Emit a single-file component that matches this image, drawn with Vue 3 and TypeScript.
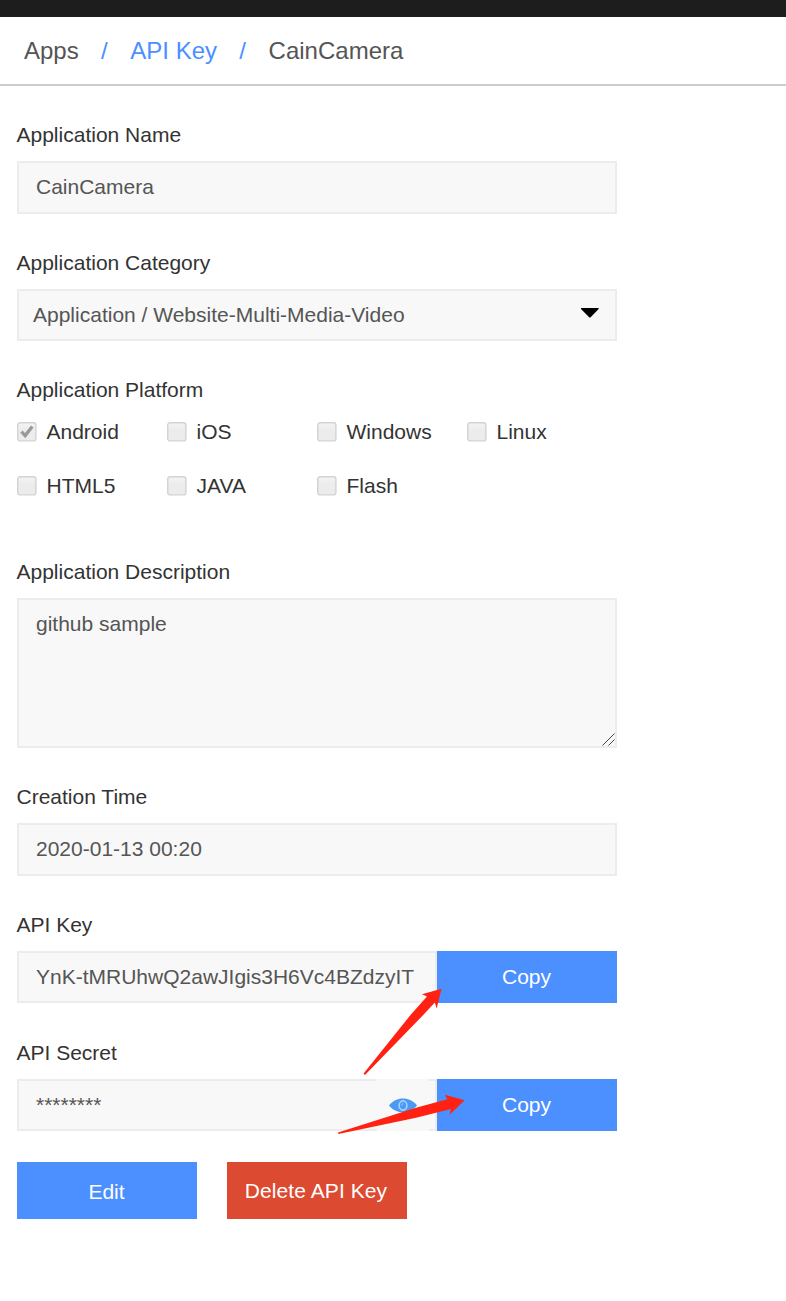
<script setup lang="ts">
interface Platform {
  name: string
  checked: boolean
}

const platforms: Platform[] = [
  { name: 'Android', checked: true },
  { name: 'iOS', checked: false },
  { name: 'Windows', checked: false },
  { name: 'Linux', checked: false },
  { name: 'HTML5', checked: false },
  { name: 'JAVA', checked: false },
  { name: 'Flash', checked: false },
]
</script>

<template>
  <div class="page">
    <div class="topbar"></div>
    <nav class="crumbs">
      <span class="crumb">Apps</span>
      <span class="sep">/</span>
      <a class="crumb link">API Key</a>
      <span class="sep">/</span>
      <span class="crumb">CainCamera</span>
    </nav>

    <main class="form">
      <section class="group">
        <div class="label">Application Name</div>
        <div class="field tall">CainCamera</div>
      </section>

      <section class="group">
        <div class="label">Application Category</div>
        <div class="field select">
          <span>Application / Website-Multi-Media-Video</span>
          <svg class="caret" width="18" height="10" viewBox="0 0 18 10"><path d="M0 0H17.6V1L9.4 9.6H8.4L0 1Z" /></svg>
        </div>
      </section>

      <section class="group">
        <div class="label">Application Platform</div>
        <div class="platforms">
          <div v-for="p in platforms" :key="p.name" class="platform">
            <svg class="box" width="20" height="20" viewBox="0 0 20 20">
              <defs>
                <linearGradient id="box-fill" x1="0" y1="0" x2="0" y2="1">
                  <stop offset="0" stop-color="#f4f4f4" />
                  <stop offset="0.4" stop-color="#ececec" />
                  <stop offset="1" stop-color="#ececec" />
                </linearGradient>
              </defs>
              <rect x="0.7" y="0.7" width="18.2" height="18.2" rx="2.4" fill="url(#box-fill)" stroke="#d3d3d3" stroke-width="1.4" />
              <path v-if="p.checked" d="M3.2 10.8L5.6 8.6L8 10.9L14 3.6L16.6 5.4L8.3 16.2Z" fill="#999" />
            </svg>
            <span>{{ p.name }}</span>
          </div>
        </div>
      </section>

      <section class="group description">
        <div class="label">Application Description</div>
        <div class="field area">
          <span>github sample</span>
          <svg class="grip" width="13" height="13" viewBox="0 0 13 13"><path d="M0.5 12.5L12.5 0.5M6.5 12.5L12.5 6.5" /></svg>
        </div>
      </section>

      <section class="group">
        <div class="label">Creation Time</div>
        <div class="field tall">2020-01-13 00:20</div>
      </section>

      <section class="group">
        <div class="label">API Key</div>
        <div class="row">
          <div class="field">YnK-tMRUhwQ2awJIgis3H6Vc4BZdzyIT</div>
          <button class="btn copy">Copy</button>
        </div>
      </section>

      <section class="group secret">
        <div class="label">API Secret</div>
        <div class="row">
          <div class="field masked">
            <span>********</span>
            <span class="reveal">
              <svg width="28" height="16" viewBox="0 0 28 16">
                <path d="M0 8.5C7 -0.8 21 -0.8 28 8.5C21 17.6 7 17.6 0 8.5Z" fill="#4a9af5" />
                <ellipse cx="14" cy="8.5" rx="3.9" ry="4.6" fill="#4a9af5" stroke="#a9d0fb" stroke-width="1.6" />
                <path d="M12.6 8.4A1.8 2.2 0 0 1 14 6.4" fill="none" stroke="#a9d0fb" stroke-width="1" />
              </svg>
            </span>
          </div>
          <button class="btn copy">Copy</button>
        </div>
      </section>

      <div class="actions">
        <button class="btn edit">Edit</button>
        <button class="btn delete">Delete API Key</button>
      </div>
    </main>

    <!-- Callout arrows pointing at the copy buttons -->
    <svg class="arrows" width="786" height="1301" viewBox="0 0 786 1301">
      <path d="M441.5 988.8L422 994.2L427 996.4L410.5 1015L363.6 1073.6L365 1075L423.2 1015L434.8 1002.6L436.7 1008.4Z" />
      <path d="M464.6 1100.3L444.8 1094.8L447.4 1099.2L416 1107.8L338 1132.5L338.4 1134L416 1117.8L450.9 1109L449.5 1114.7Z" />
    </svg>
  </div>
</template>

<style>
body {
  background: #fff;
}
</style>

<style scoped>
.page {
  position: relative;
  width: 786px;
  height: 1301px;
  overflow: hidden;
  box-sizing: border-box;
  font-family: "Liberation Sans", Arial, sans-serif;
  font-size: 21px;
  color: #333;
}
.page * {
  box-sizing: border-box;
}
.topbar {
  height: 17px;
  background: #1d1d1d;
}
.crumbs {
  display: flex;
  align-items: center;
  height: 69px;
  padding-left: 24px;
  border-bottom: 2px solid #ccc;
  font-size: 24px;
  color: #555;
}
.sep {
  width: 7px;
  margin: 0 22.3px;
}
.sep,
.link {
  color: #4c8fff;
}
.form {
  width: 617px;
  padding: 35px 0 0 17px;
}
.group {
  margin-bottom: 35px;
}
.label {
  height: 28px;
  margin: 0 0 12px -0.5px;
  line-height: 28px;
}
.field {
  display: flex;
  align-items: center;
  height: 52px;
  padding: 0 17px;
  border: 2px solid #ececec;
  background: #f8f8f8;
  color: #555;
  white-space: nowrap;
}
.tall {
  height: 53px;
  padding-bottom: 1px;
}
.select {
  justify-content: space-between;
  padding: 0 16px 0 14px;
}
.caret {
  margin-bottom: 5px;
  fill: #000;
}
.platforms {
  display: grid;
  grid-template-columns: repeat(4, 150px);
  row-gap: 34px;
  padding: 6px 0 27px;
}
.platform {
  display: flex;
  align-items: center;
  gap: 9.5px;
  height: 20px;
  line-height: 20px;
}
.box {
  display: block;
}
.area {
  position: relative;
  align-items: flex-start;
  height: 150px;
  padding-top: 10px;
  line-height: 28px;
}
.grip {
  position: absolute;
  right: 0;
  bottom: 0;
}
.grip path {
  stroke: #444;
  stroke-width: 1;
}
.row {
  display: flex;
}
.row .field {
  flex: 1;
}
.group.secret {
  margin-top: 36px;
  margin-bottom: 31px;
}
.btn {
  width: 180px;
  padding: 0 1px 0 0;
  border: 0;
  background: #4c8fff;
  color: #fff;
  font: inherit;
}
.copy {
  height: 52px;
}
.masked {
  position: relative;
}
.reveal {
  position: absolute;
  top: -2px;
  right: 6px;
  display: flex;
  align-items: center;
  justify-content: center;
  width: 52px;
  height: 52px;
  background: #f8f8f8;
}
.actions {
  display: flex;
  gap: 30px;
}
.actions .btn {
  height: 57px;
}
.actions .edit {
  padding-top: 2px;
}
.actions .delete {
  padding-right: 2px;
  background: #dc4a32;
  letter-spacing: 0.08px;
}
.arrows {
  position: absolute;
  top: 0;
  left: 0;
  fill: #ff2112;
  pointer-events: none;
}
</style>
